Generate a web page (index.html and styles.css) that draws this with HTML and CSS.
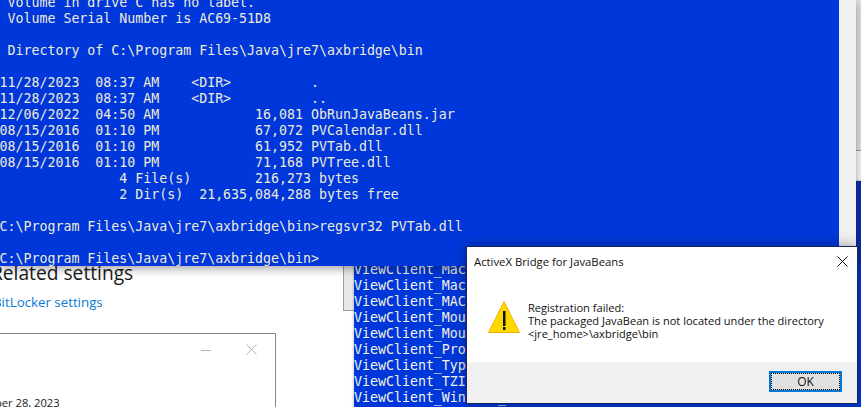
FILE: index.html
```html
<!DOCTYPE html>
<html lang="en">
<head>
<meta charset="utf-8">
<title>ActiveX Bridge for JavaBeans</title>
<link rel="stylesheet" href="styles.css">
</head>
<body>
<main class="desktop">
  <div class="win back-right"></div>
  <div class="win back-panel"></div>

  <section class="win settings">
    <h2 class="settings-title">Related settings</h2>
    <a class="settings-link" href="#">BitLocker settings</a>
    <div class="inner-win">
      <div class="inner-controls">
        <svg class="inner-icon" width="10" height="10" viewBox="0 0 10 10"><path d="M0 5.5H10" stroke="#b4b4b4" fill="none"/></svg>
        <svg class="inner-icon" width="11" height="11" viewBox="0 0 11 11"><path d="M.5.5l10 10M10.5.5l-10 10" stroke="#b4b4b4" fill="none"/></svg>
      </div>
      <p class="inner-date">November 28, 2023</p>
    </div>
  </section>

  <section class="win console-two">
<pre class="console-text">ViewClient_Machine_Name
ViewClient_Machine_Domain
ViewClient_MAC_Address
ViewClient_Mouse_Buttons
ViewClient_Mouse_Type
ViewClient_Protocol
ViewClient_Type
ViewClient_TZID
ViewClient_Windows_Build</pre>
  </section>

  <section class="win console-one">
    <pre class="console-text"> Volume in drive C has no label.
 Volume Serial Number is AC69-51D8

 Directory of C:\Program Files\Java\jre7\axbridge\bin

11/28/2023  08:37 AM    &lt;DIR&gt;          .
11/28/2023  08:37 AM    &lt;DIR&gt;          ..
12/06/2022  04:50 AM            16,081 ObRunJavaBeans.jar
08/15/2016  01:10 PM            67,072 PVCalendar.dll
08/15/2016  01:10 PM            61,952 PVTab.dll
08/15/2016  01:10 PM            71,168 PVTree.dll
               4 File(s)        216,273 bytes
               2 Dir(s)  21,635,084,288 bytes free

C:\Program Files\Java\jre7\axbridge\bin&gt;regsvr32 PVTab.dll

C:\Program Files\Java\jre7\axbridge\bin&gt;</pre>
    <div class="scrollbar"></div>
  </section>

  <section class="win dialog">
    <header class="dialog-head">
      <span class="dialog-title">ActiveX Bridge for JavaBeans</span>
      <svg class="dialog-close" width="11" height="11" viewBox="0 0 11 11"><path d="M.5.5l10 10M10.5.5l-10 10" stroke="#111" fill="none"/></svg>
    </header>
    <div class="dialog-body">
      <svg class="warn-icon" width="34" height="34" viewBox="0 0 34 34">
        <path d="M17 1.5L32.5 32.5H1.5Z" fill="#ffd800" stroke="#f5b400" stroke-linejoin="round"/>
        <rect x="16" y="11" width="2.5" height="15" fill="#111"/>
        <rect x="16" y="27" width="2.5" height="3" fill="#111"/>
      </svg>
      <p class="dialog-msg">Registration failed:<br>The packaged JavaBean is not located under the directory<br>&lt;jre_home&gt;\axbridge\bin</p>
    </div>
    <footer class="dialog-foot">
      <button class="ok-btn" type="button"><span class="ok-label">OK</span></button>
    </footer>
  </section>
</main>
</body>
</html>
```
FILE: styles.css
```css
* { box-sizing: border-box; }
html, body { margin: 0; padding: 0; }
body { background: #fff; overflow: hidden; }

.desktop {
  position: relative;
  width: 861px;
  height: 407px;
  overflow: hidden;
  background: #fff;
}

.win { position: absolute; }

.back-right {
  left: 800px;
  top: -2px;
  width: 70px;
  height: 153px;
  background: linear-gradient(to right, #c8c8c8, #e6e6e6 60%);
  border-bottom: 1px solid #9a9a9a;
}

.back-panel {
  left: 343px;
  top: 240px;
  width: 30px;
  height: 71px;
  background: #e8e8e8;
  border: 1px solid #9c9c9c;
}

.settings {
  left: 0;
  top: 240px;
  width: 343px;
  height: 167px;
  background: #fff;
  font-family: "Open Sans", "Noto Sans", sans-serif;
  display: flex;
  flex-direction: column;
}

.settings-title {
  margin: 20px 0 0 -9px;
  font-size: 19.2px;
  line-height: 26px;
  font-weight: 400;
  color: #1a1a1a;
}

.settings-link {
  margin: 6px 0 0 -7px;
  font-size: 13.3px;
  line-height: 20px;
  color: #0a7bd2;
  text-decoration: none;
}

.inner-win {
  margin: 21px 0 0 -20px;
  width: 296px;
  flex: 1;
  min-height: 80px;
  background: #fff;
  border: 1px solid #858585;
  display: flex;
  flex-direction: column;
  padding: 10px 18px 0 0;
}

.inner-controls {
  display: flex;
  justify-content: flex-end;
  gap: 35px;
  align-items: center;
}

.inner-icon { display: block; }

.inner-date {
  margin: 40px 0 0 -23.5px;
  font-size: 11.2px;
  line-height: 16px;
  color: #222;
  white-space: nowrap;
}

.console-two {
  left: 354px;
  top: 181px;
  width: 520px;
  height: 240px;
  background: #0b2fb4;
  padding-top: 83px;
  box-shadow: 0 0 3px rgba(0, 0, 0, .3);
}

.console-two .console-text {
  background: #0037da;
  margin: -2px 0 0 0;
  height: 170px;
  color: #f2f2e6;
}

.console-one {
  left: 0;
  top: 0;
  width: 856px;
  height: 266px;
  background: #0037da;
  display: flex;
  justify-content: space-between;
  box-shadow: 0 2px 10px rgba(0, 0, 0, .4);
}

.console-text {
  margin: -5px 0 0 -.5px;
  font-family: "DejaVu Sans Mono", "Liberation Mono", monospace;
  font-size: 13.28px;
  line-height: 16px;
  color: #ecebd8;
  white-space: pre;
}

.scrollbar {
  width: 17px;
  background: #f0f0f0;
  height: 266px;
  flex: none;
}

.dialog {
  left: 466px;
  top: 246px;
  width: 392px;
  height: 158px;
  background: #fff;
  border: 1px solid #16245c;
  box-shadow: 0 0 12px rgba(0, 0, 0, .35);
  display: flex;
  flex-direction: column;
  font-family: "Open Sans", "Noto Sans", sans-serif;
  color: #111;
}

.dialog-head {
  height: 29px;
  padding: 0 9px 0 7px;
  display: flex;
  align-items: center;
  justify-content: space-between;
}

.dialog-title { font-size: 11.3px; }
.dialog-close { display: block; }

.dialog-body {
  flex: 1;
  display: flex;
  align-items: flex-start;
  padding: 24px 0 0 20px;
  gap: 7px;
}

.warn-icon { display: block; flex: none; }

.dialog-msg {
  margin: 1px 0 0 0;
  font-size: 11.07px;
  line-height: 13px;
  white-space: nowrap;
}

.dialog-foot {
  height: 41px;
  background: #f0f0f0;
  display: flex;
  justify-content: flex-end;
  align-items: flex-start;
  padding: 9px 15px 0 0;
}

.ok-btn {
  width: 73px;
  height: 21px;
  padding: 0;
  background: #e1e1e1;
  border: 2px solid #0078d7;
  display: flex;
  font-family: inherit;
  font-size: 12px;
  color: #111;
}

.ok-label {
  flex: 1;
  border: 1px dotted #000;
  line-height: 15px;
  text-align: center;
}
```
